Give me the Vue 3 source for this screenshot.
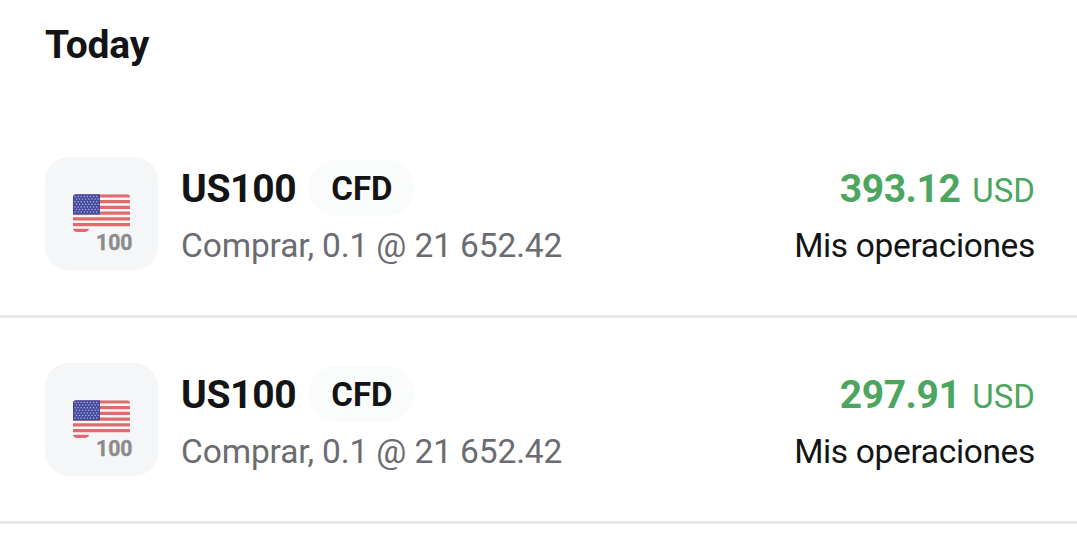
<template>
  <main class="history">
    <h1 class="heading">Today</h1>
    <ul class="deals">
      <li v-for="deal in deals" :key="deal.id" class="deal">
        <div class="logo">
          <svg width="112" height="112" viewBox="0 0 112 112">
            <clipPath :id="`flag-${deal.id}`">
              <path d="M31 37.3h51q3 0 3 3v30H44.500q-.6 4.600-4.500 4.600h-8q-4 0-4-4V40.300q0-3 3-3z" />
            </clipPath>
            <g :clip-path="`url(#flag-${deal.id})`">
              <rect x="28" y="37" width="57" height="39" fill="#fdf6f6" />
              <path v-for="n in 7" :key="n" :d="`M28 ${33.1 + n * 5.75}h57`" stroke="#df6b6e" stroke-width="3.1" />
              <rect x="28" y="37" width="27" height="20.500" fill="#454a9e" />
              <g fill="#b4b7de">
                <circle v-for="star in stars" :key="star.id" :cx="star.x" :cy="star.y" r="0.75" />
              </g>
            </g>
            <text x="51" y="93" textLength="36.500" lengthAdjust="spacingAndGlyphs">100</text>
          </svg>
        </div>
        <div class="info">
          <div class="title">
            <span class="symbol">{{ deal.symbol }}</span>
            <span class="tag">{{ deal.type }}</span>
          </div>
          <div class="line">{{ deal.details }}</div>
        </div>
        <div class="result">
          <div class="profit"><b>{{ deal.profit }}</b><span>USD</span></div>
          <div class="source">Mis operaciones</div>
        </div>
      </li>
    </ul>
  </main>
</template>

<script setup>
const deals = [
  { id: 1, symbol: 'US100', type: 'CFD', details: 'Comprar, 0.1 @ 21 652.42', profit: '393.12' },
  { id: 2, symbol: 'US100', type: 'CFD', details: 'Comprar, 0.1 @ 21 652.42', profit: '297.91' }
]

const stars = []
for (let row = 0; row < 7; row++) {
  for (let col = 0; col < 8; col++) {
    stars.push({ id: row * 8 + col, x: 30 + col * 3.1 + (row % 2) * 1.5, y: 39.5 + row * 2.6 })
  }
}
</script>

<style>
body {
  background: #fff;
}
</style>

<style scoped>
.history {
  height: 546px;
  overflow: hidden;
  font-family: Roboto, sans-serif;
  color: #131416;
}

.heading {
  box-sizing: border-box;
  margin: 0;
  padding: 21px 45px 0;
  height: 112px;
  font-size: 39px;
  line-height: 48px;
  font-weight: 700;
  letter-spacing: -0.2px;
}

.deals {
  margin: 0;
  padding: 0;
  list-style: none;
}

.deal {
  display: flex;
  box-sizing: border-box;
  height: 206px;
  padding: 45px 42px 0 45px;
  border-bottom: 3px solid #e9ebeb;
}

.logo {
  width: 113px;
  height: 113px;
  border-radius: 24px;
  background: #f5f6f8;
}

.logo text {
  font-size: 21.5px;
  font-weight: 700;
  fill: #8c8c8c;
  stroke: #8c8c8c;
  stroke-width: 0.4px;
}

.info {
  flex: 1;
  margin-left: 23px;
}

.title {
  display: flex;
  align-items: center;
  height: 62px;
}

.symbol {
  padding-top: 1px;
  font-size: 39px;
  font-weight: 700;
  letter-spacing: -0.3px;
}

.tag {
  box-sizing: border-box;
  height: 56px;
  margin-left: 12px;
  padding: 1px 21px 0 23px;
  border-radius: 28px;
  background: #fafcfc;
  font-size: 33px;
  line-height: 56px;
  font-weight: 700;
}

.line,
.source {
  font-size: 33.5px;
  line-height: 53px;
  white-space: nowrap;
}

.line {
  color: #6b6c71;
  letter-spacing: -0.13px;
}

.source {
  letter-spacing: -0.34px;
}

.result {
  text-align: right;
}

.profit {
  display: flex;
  align-items: baseline;
  justify-content: flex-end;
  height: 62px;
  line-height: 64px;
  color: #4da660;
}

.profit b {
  font-size: 39px;
  letter-spacing: -0.45px;
}

.profit span {
  margin-left: 12px;
  font-size: 33px;
}
</style>
